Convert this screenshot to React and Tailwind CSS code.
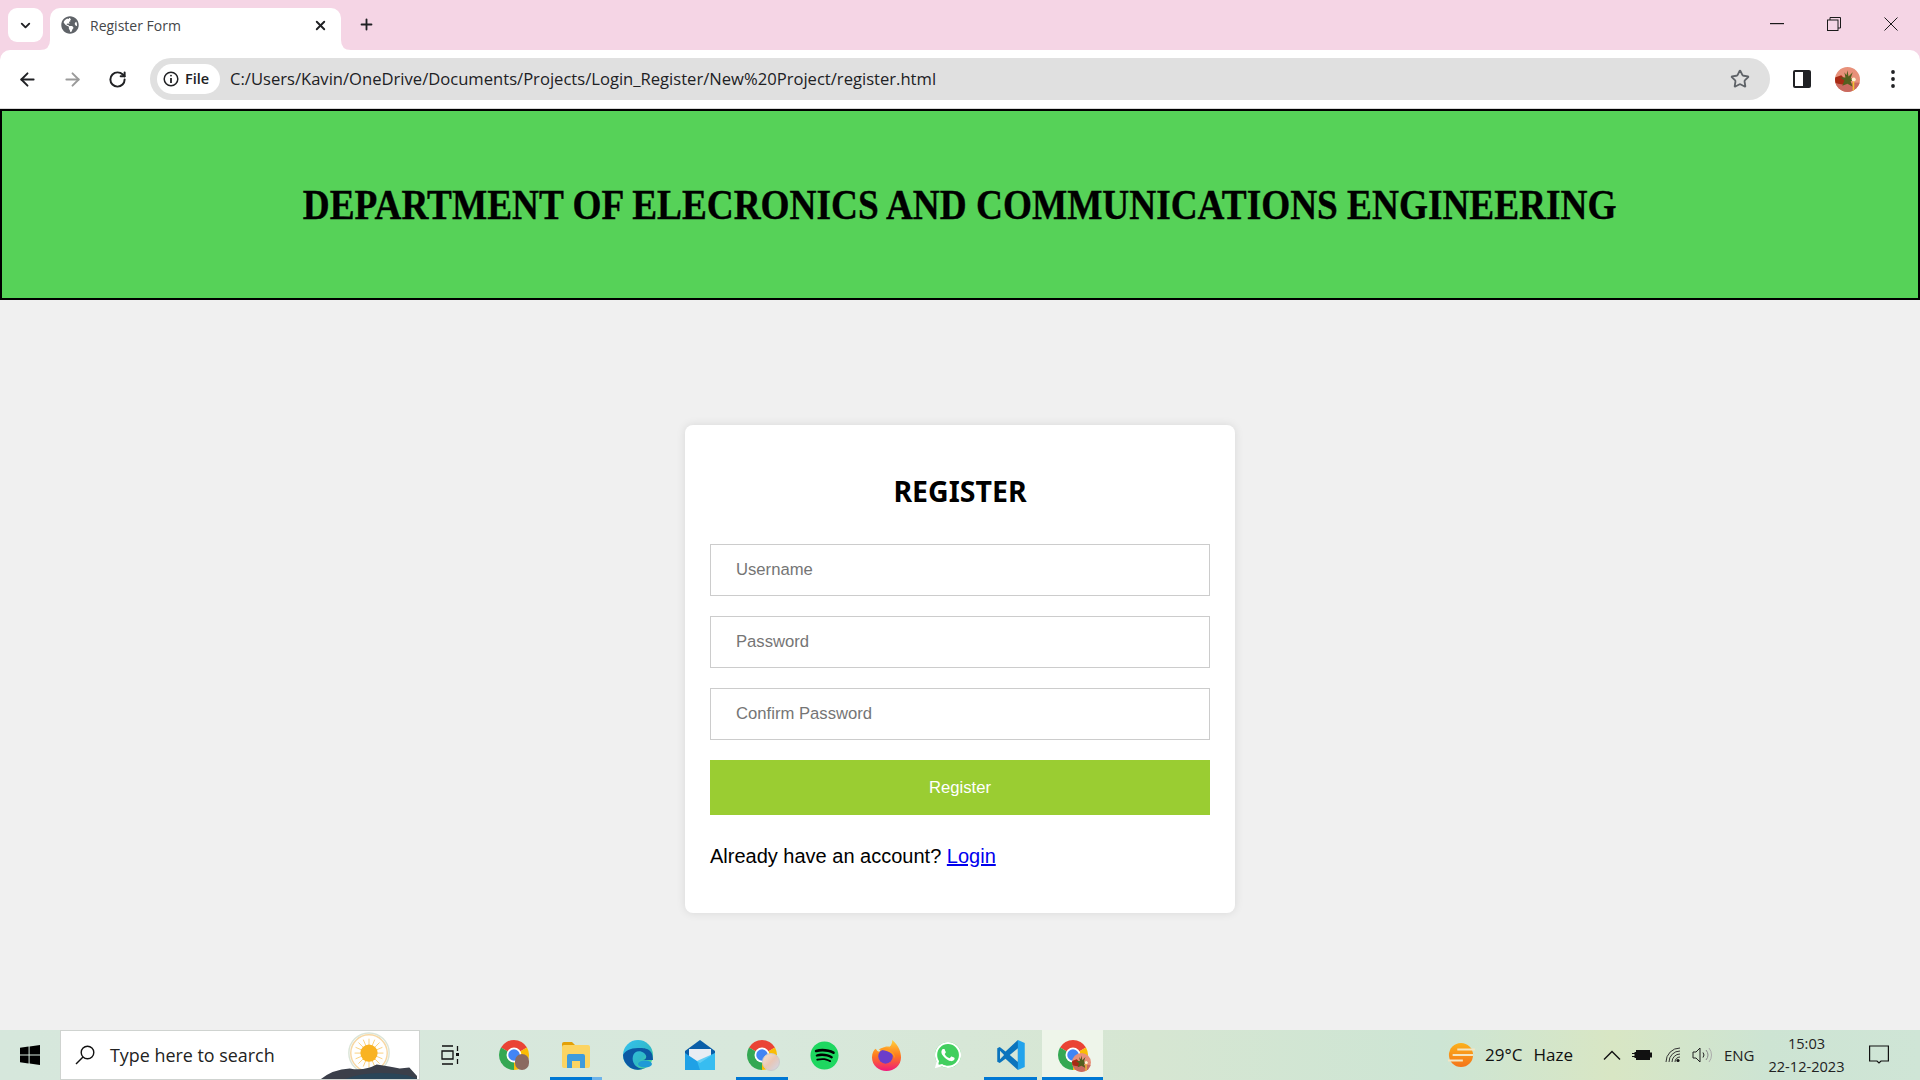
import React from "react";
import { ArrowLeft, ArrowRight, RotateCw, Star, X, Plus, ChevronDown } from "lucide-react";
import { FaGlobeAmericas, FaWhatsapp, FaSpotify } from "react-icons/fa";

const ui = "font-['Open_Sans','Noto_Sans',sans-serif]";

function Chrome({ className, badge }) {
  return (
    <div className={"relative " + className}>
      <svg viewBox="0 0 24 24" className="w-full h-full">
        <path d="M12 12L1.61 6A12 12 0 0 1 22.39 6Z" fill="#ea4335" />
        <path d="M12 12L22.39 6A12 12 0 0 1 12 24Z" fill="#fbbc04" />
        <path d="M12 12L12 24A12 12 0 0 1 1.61 6Z" fill="#34a853" />
        <circle cx="12" cy="12" r="6" fill="#fff" />
        <circle cx="12" cy="12" r="4.6" fill="#4285f4" />
      </svg>
      {badge}
    </div>
  );
}

function Avatar({ className }) {
  return (
    <svg viewBox="0 0 24 24" className={className}>
      <defs>
        <clipPath id="avc"><circle cx="12" cy="12" r="12" /></clipPath>
      </defs>
      <g clipPath="url(#avc)">
        <rect width="24" height="24" fill="#e8917a" />
        <rect y="15" width="24" height="9" fill="#c96a60" />
        <path d="M0 10L6 8L11 13L9 17L3 16L0 15Z" fill="#a82a14" />
        <path d="M12 3L13 9L17 5L15 11L20 11L15 14L17 19L12 16L7 18L9 13L5 10L10 10L9 5L11 8Z" fill="#55601f" />
        <circle cx="18" cy="12" r="2" fill="#fff3d0" />
        <rect x="17" y="14" width="1.5" height="10" fill="#f4c430" />
      </g>
    </svg>
  );
}

function Header() {
  return (
    <div className={"bg-[#f5d5e5] " + ui}>
      <div className="h-[50px] flex items-start relative">
        <div className="ml-2 mt-2 w-[35px] h-[34px] bg-white rounded-[9px] flex items-center justify-center">
          <ChevronDown className="w-[15px] h-[15px] text-[#202124]" strokeWidth={3} />
        </div>
        <div className="ml-[7px] mt-2 w-[291px] h-[42px] bg-white rounded-t-[10px] flex items-center pl-[11px] pr-[13px] pb-[8px] relative">
          <svg viewBox="0 0 10 10" className="absolute left-[-10px] bottom-0 w-[10px] h-[10px]"><path d="M0 10Q10 10 10 0V10Z" fill="#fff" /></svg>
          <svg viewBox="0 0 10 10" className="absolute right-[-10px] bottom-0 w-[10px] h-[10px]"><path d="M10 10Q0 10 0 0V10Z" fill="#fff" /></svg>
          <FaGlobeAmericas className="text-[#5f6368] w-[18px] h-[18px]" />
          <span className="ml-[11px] text-[14px] text-[#45474a] flex-1">Register Form</span>
          <X className="w-[15px] h-[15px] text-[#202124]" strokeWidth={3} />
        </div>
        <Plus className="ml-[17px] mt-[16px] w-[17px] h-[17px] text-[#202124]" strokeWidth={2.6} />
        <div className="ml-auto flex items-center h-[48px] text-[#1a1a1a]">
          <svg viewBox="0 0 14 2" className="w-[14px] h-[2px]"><rect width="14" height="1.2" fill="#1a1a1a" /></svg>
          <svg viewBox="0 0 14 14" className="ml-[43px] w-[14px] h-[14px]" fill="none" stroke="#1a1a1a" strokeWidth="1">
            <rect x="0.5" y="3" width="10.5" height="10.5" />
            <path d="M3 3V.5H13.5V11H11" />
          </svg>
          <svg viewBox="0 0 14 14" className="ml-[43px] mr-[22px] w-[14px] h-[14px]" fill="none" stroke="#1a1a1a" strokeWidth="1">
            <path d="M.5.5L13.5 13.5M13.5.5L.5 13.5" />
          </svg>
        </div>
      </div>
      <div className="h-[58px] bg-white rounded-t-[10px] flex items-center border-b border-[#d8d8d8] box-content">
        <ArrowLeft className="ml-[17px] w-[21px] h-[21px] text-[#202124]" strokeWidth={2.2} />
        <ArrowRight className="ml-[24px] w-[21px] h-[21px] text-[#9a9a9a]" strokeWidth={2.2} />
        <RotateCw className="ml-[25px] w-[19px] h-[19px] text-[#202124]" strokeWidth={2.5} />
        <div className="ml-[23px] w-[1620px] h-[42px] rounded-full bg-[#e0e0e0] flex items-center pl-[7px] pr-[20px]">
          <div className="w-[63px] h-[30px] bg-white rounded-full flex items-center pl-[6px]">
            <svg viewBox="0 0 16 16" className="w-4 h-4" fill="none" stroke="#202124" strokeWidth="1.5">
              <circle cx="8" cy="8" r="6.8" />
              <path d="M8 7V12" strokeWidth="1.8" />
              <circle cx="8" cy="4.6" r=".9" fill="#202124" stroke="none" />
            </svg>
            <span className="ml-[6px] text-[14.5px] font-semibold text-[#202124]">File</span>
          </div>
          <span className="ml-[10px] mt-[1px] text-[16.6px] text-[#202124] whitespace-nowrap flex-1">C:/Users/Kavin/OneDrive/Documents/Projects/Login_Register/New%20Project/register.html</span>
          <Star className="w-[20px] h-[20px] text-[#5f6368]" strokeWidth={2.2} />
        </div>
        <svg viewBox="0 0 18 18" className="ml-[23px] w-[18px] h-[18px]">
          <rect x="0" y="0" width="18" height="18" rx="2" fill="#202124" />
          <rect x="2" y="2" width="8" height="14" fill="#fff" />
        </svg>
        <Avatar className="ml-[24px] w-[25px] h-[25px]" />
        <svg viewBox="0 0 4 18" className="ml-[31px] w-[4px] h-[18px]">
          <circle cx="2" cy="2" r="1.9" fill="#202124" /><circle cx="2" cy="9" r="1.9" fill="#202124" /><circle cx="2" cy="16" r="1.9" fill="#202124" />
        </svg>
      </div>
    </div>
  );
}

function Field({ placeholder }) {
  return (
    <input
      placeholder={placeholder}
      className="block w-full h-[52px] border border-[#ccc] bg-white pl-[25px] text-[16.67px] placeholder:text-[#757575] outline-none font-['Liberation_Sans',Arial,sans-serif]"
    />
  );
}

function TaskItem({ children, line, tail, wide }) {
  return (
    <div className={"relative h-full flex items-center justify-center " + (wide ? "w-[63px]" : "w-[62px]")}>
      {children}
      {line && <div className="absolute left-[5px] right-[5px] bottom-0 h-[3px] bg-[#0078d4]" />}
      {tail && <div className="absolute right-[5px] w-[10px] bottom-0 h-[3px] bg-[#6db3ea]" />}
    </div>
  );
}

function Taskbar() {
  return (
    <div className={"h-[50px] flex items-stretch bg-[linear-gradient(90deg,#d6e7dc_0%,#d8e8dc_40%,#d6e6d2_60%,#cde5d4_75%,#d8e6c4_84%,#cde4d3_92%,#cfe5d6_100%)] " + ui}>
      <div className="w-[60px] flex items-center justify-center">
        <svg viewBox="0 0 20 20" className="w-[20px] h-[20px]">
          <path d="M0 2.8L8.6 1.5V9.4H0ZM9.6 1.4L20 0V9.4H9.6ZM0 10.5H8.6V18.4L0 17.2ZM9.6 10.5H20V20L9.6 18.6Z" fill="#000" />
        </svg>
      </div>
      <div className="w-[360px] bg-white border border-[#cfd3d0] flex items-center relative overflow-hidden">
        <svg viewBox="0 0 20 20" className="ml-[14px] w-[20px] h-[20px]" fill="none" stroke="#111" strokeWidth="1.4">
          <circle cx="12.5" cy="7.5" r="6.3" /><path d="M8 12L1 19" />
        </svg>
        <span className="ml-[15px] text-[17.9px] text-[#222]">Type here to search</span>
        <svg viewBox="0 0 100 50" className="absolute right-0 top-0 w-[100px] h-[48px]">
          <circle cx="50" cy="23" r="21" fill="#fff" stroke="#dbe5d8" strokeWidth="1.5" />
          <circle cx="50" cy="23" r="19" fill="#fff" stroke="#f7d7a3" strokeWidth="1.5" />
          <g stroke="#fad07a" strokeWidth="1">
            <path d="M50 8V38M35 23H65M39 12L61 34M61 12L39 34M44 9L56 37M56 9L44 37M36 17L64 29M64 17L36 29" />
          </g>
          <circle cx="50" cy="23" r="9" fill="#f9b322" />
          <path d="M0 50Q12 40 30 39Q45 42 58 35Q72 37 82 39L92 38L100 47V50Z" fill="#3b3f4a" />
          <path d="M25 50Q50 40 90 46L100 50Z" fill="#2a4558" />
        </svg>
      </div>
      <div className="w-[63px] flex items-center pl-[21px]">
        <svg viewBox="0 0 18 20" className="w-[18px] h-[20px]" fill="none" stroke="#111" strokeWidth="1.3">
          <path d="M1 1H12M1 19H12M1 6H12V14H1Z" /><path d="M16.5 1V6M16.5 14V19" /><rect x="15" y="8" width="3" height="3" fill="#111" stroke="none" />
        </svg>
      </div>
      <TaskItem>
        <Chrome className="w-[30px] h-[30px]" badge={<div className="absolute right-0 bottom-0 w-[14px] h-[16px] rounded-full bg-[#8b6a60]" />} />
      </TaskItem>
      <TaskItem line tail>
        <svg viewBox="0 0 28 26" className="w-[28px] h-[26px]">
          <path d="M0 2a2 2 0 0 1 2-2h8l3 3v3H0Z" fill="#e3a008" />
          <rect x="0" y="3" width="28" height="23" rx="2" fill="#fcd462" />
          <path d="M5 26V14a2 2 0 0 1 2-2h14a2 2 0 0 1 2 2v12h-5v-7h-8v7Z" fill="#3f9bdc" />
        </svg>
      </TaskItem>
      <TaskItem>
        <svg viewBox="0 0 30 30" className="w-[30px] h-[30px]">
          <defs>
            <linearGradient id="eg" x1="0" y1="0" x2="1" y2="1"><stop offset="0" stopColor="#35c1f1" /><stop offset="0.6" stopColor="#2fb9c8" /><stop offset="1" stopColor="#66eb6e" /></linearGradient>
          </defs>
          <circle cx="15" cy="15" r="15" fill="url(#eg)" />
          <path d="M0 15A15 15 0 0 0 22 28C15 30 8 24 10 16C11 11 17 10 21 13C25 16 23 20 20 20H30C30 8 22 8 15 8C7 8 2 11 0 15Z" fill="#0c59a4" />
          <ellipse cx="22" cy="24" rx="7" ry="3.5" fill="#1e9ad6" />
        </svg>
      </TaskItem>
      <TaskItem>
        <svg viewBox="0 0 30 30" className="w-[30px] h-[30px]">
          <path d="M15 0L30 11V29H0V11Z" fill="#0a5ea8" />
          <path d="M4 9H26V17L15 24L4 17Z" fill="#e8edf3" />
          <path d="M0 13L15 23L30 13V30H0Z" fill="#1fa1e6" />
          <path d="M30 13V30H15L12 21Z" fill="#3dc4f4" opacity="0.8" />
        </svg>
      </TaskItem>
      <TaskItem line>
        <Chrome className="w-[30px] h-[30px]" badge={<div className="absolute right-[-3px] bottom-[-1px] w-[18px] h-[18px] rounded-full bg-[linear-gradient(135deg,#f7e5d0,#e9c6b5,#cfd8ea)] border border-[#ccc]" />} />
      </TaskItem>
      <TaskItem>
        <div className="relative w-[29px] h-[29px] flex items-center justify-center">
          <div className="absolute inset-[2px] rounded-full bg-black" />
          <FaSpotify className="relative w-[29px] h-[29px] text-[#1ed760]" />
        </div>
      </TaskItem>
      <TaskItem>
        <svg viewBox="0 0 30 32" className="w-[29px] h-[31px]">
          <defs>
            <linearGradient id="fx" x1="0.5" y1="0" x2="0.5" y2="1"><stop offset="0" stopColor="#ffd23c" /><stop offset="0.5" stopColor="#ff7a1d" /><stop offset="1" stopColor="#f0187b" /></linearGradient>
          </defs>
          <path d="M21 0C28 6 30 13 30 18C30 26 23 32 15 32C7 32 0 26 0 18C0 13 2 10 4 9C5 11 6 12 8 12C9 9 13 6 18 7C20 6 21 3 21 0Z" fill="url(#fx)" />
          <circle cx="14" cy="17" r="7.5" fill="#6b3dc9" />
          <path d="M7 10C13 5 23 10 24 19C22 14 16 10 7 10Z" fill="#ff9a22" />
        </svg>
      </TaskItem>
      <TaskItem>
        <div className="relative w-[30px] h-[30px] flex items-center justify-center">
          <div className="absolute inset-[2px] rounded-full bg-[#41cf5e]" />
          <FaWhatsapp className="relative w-[30px] h-[30px] text-white" />
        </div>
      </TaskItem>
      <TaskItem line wide>
        <svg viewBox="0 0 24 24" className="w-[30px] h-[30px]">
          <path d="M17.5 0L7.6 9.1L3 5.6L1 6.6V17.4L3 18.4L7.6 14.9L17.5 24L18 12Z" fill="#0b74bd" />
          <path d="M3.2 8.6V15.4L6.5 12Z" fill="#d6e6d8" />
          <path d="M17.5 6.5V17.5L11 12Z" fill="#d6e6d8" />
          <path d="M17.5 0L23 2.4V21.6L17.5 24Z" fill="#22a3ec" />
        </svg>
      </TaskItem>
      <div className="relative w-[61px] bg-[#eef5ea] flex items-center justify-center">
        <Chrome className="w-[30px] h-[30px]" badge={<div className="absolute right-[-3px] bottom-[-2px]"><Avatar className="w-[19px] h-[19px]" /></div>} />
        <div className="absolute left-0 right-0 bottom-0 h-[3px] bg-[#0078d4]" />
      </div>
      <div className="flex-1 flex items-center text-[#111]">
        <svg viewBox="0 0 28 28" className="ml-[344px] w-[28px] h-[26px]">
          <defs><linearGradient id="wx" x1="0" y1="0" x2="0" y2="1"><stop offset="0" stopColor="#fbb11c" /><stop offset="1" stopColor="#f4741a" /></linearGradient></defs>
          <circle cx="14" cy="14" r="13" fill="url(#wx)" />
          <g stroke="#f4e6c3" strokeWidth="2.2">
            <path d="M10 8H29M5 14H27M0 20H16" />
          </g>
        </svg>
        <span className="ml-[10px] text-[17px]">29°C</span>
        <span className="ml-[11px] text-[17px]">Haze</span>
        <svg viewBox="0 0 18 10" className="ml-[30px] w-[18px] h-[10px]" fill="none" stroke="#111" strokeWidth="1.4">
          <path d="M1 9.5L9 1.5L17 9.5" />
        </svg>
        <svg viewBox="0 0 20 12" className="ml-[11px] w-[20px] h-[12px]">
          <rect x="4.5" y="1.5" width="13" height="9" fill="#111" stroke="#111" /><rect x="18" y="3.5" width="2" height="5" fill="#111" /><path d="M0 4.5H3M0 7.5H3" stroke="#111" /><rect x="2.5" y="3" width="2" height="6" fill="#111" />
        </svg>
        <svg viewBox="0 0 16 16" className="ml-[13px] w-[16px] h-[16px]" fill="none" stroke="#333" strokeWidth="1">
          <path d="M1 15A14 14 0 0 1 15 1M4 15A11 11 0 0 1 15 4M7 15A8 8 0 0 1 15 7M10 15A5 5 0 0 1 15 10" /><circle cx="13" cy="13.5" r="1.6" fill="#111" stroke="none" />
        </svg>
        <svg viewBox="0 0 20 16" className="ml-[11px] w-[20px] h-[16px]" fill="none" stroke="#222" strokeWidth="1">
          <path d="M1 5H4L8 1V15L4 11H1Z" /><path d="M11 5.5A4 4 0 0 1 11 10.5" /><path d="M14 3A8 8 0 0 1 14 13" stroke="#888" /><path d="M17 1A11 11 0 0 1 17 15" stroke="#aaa" />
        </svg>
        <span className="ml-[12px] text-[15px] text-[#222]">ENG</span>
        <div className="ml-[13px] w-[78px] flex flex-col items-center text-[14.6px] leading-[23px] text-[#222]">
          <span>15:03</span>
          <span>22-12-2023</span>
        </div>
        <svg viewBox="0 0 20 20" className="ml-[24px] w-[20px] h-[20px]" fill="none" stroke="#111" strokeWidth="1.2">
          <path d="M.6 1H19.4V16H12L10 18L8 16H.6Z" />
        </svg>
      </div>
    </div>
  );
}

export default function App() {
  return (
    <div className="h-screen w-full flex flex-col bg-[#f0f0f0] overflow-hidden">
      <Header />
      <div className="h-[191px] bg-[#56d258] border-2 border-black flex items-center justify-center">
        <h1 className="text-[43px] leading-[50px] font-bold text-black font-['Liberation_Serif',serif] whitespace-nowrap scale-x-[0.867] [-webkit-text-stroke:0.4px_black]">DEPARTMENT OF ELECRONICS AND COMMUNICATIONS ENGINEERING</h1>
      </div>
      <div className="flex-1 flex justify-center pt-[125px]">
        <div className="w-[550px] h-[488px] bg-white rounded-[8px] shadow-[0_0_10px_rgba(0,0,0,0.1)] px-[25px] pt-[46px]">
          <h2 className="text-center text-[28.5px] leading-[40px] font-bold text-black font-['Noto_Sans',sans-serif] mb-[33px]">REGISTER</h2>
          <div className="flex flex-col gap-[20px]">
            <Field placeholder="Username" />
            <Field placeholder="Password" />
            <Field placeholder="Confirm Password" />
            <button className="h-[55px] w-full bg-[#9acd32] text-white text-[16.67px] font-['Liberation_Sans',Arial,sans-serif]">Register</button>
          </div>
          <p className="mt-[29px] text-[20px] leading-[24px] text-black font-['Liberation_Sans',Arial,sans-serif]">
            Already have an account? <a href="#" className="text-[#0000ee] underline">Login</a>
          </p>
        </div>
      </div>
      <Taskbar />
    </div>
  );
}
